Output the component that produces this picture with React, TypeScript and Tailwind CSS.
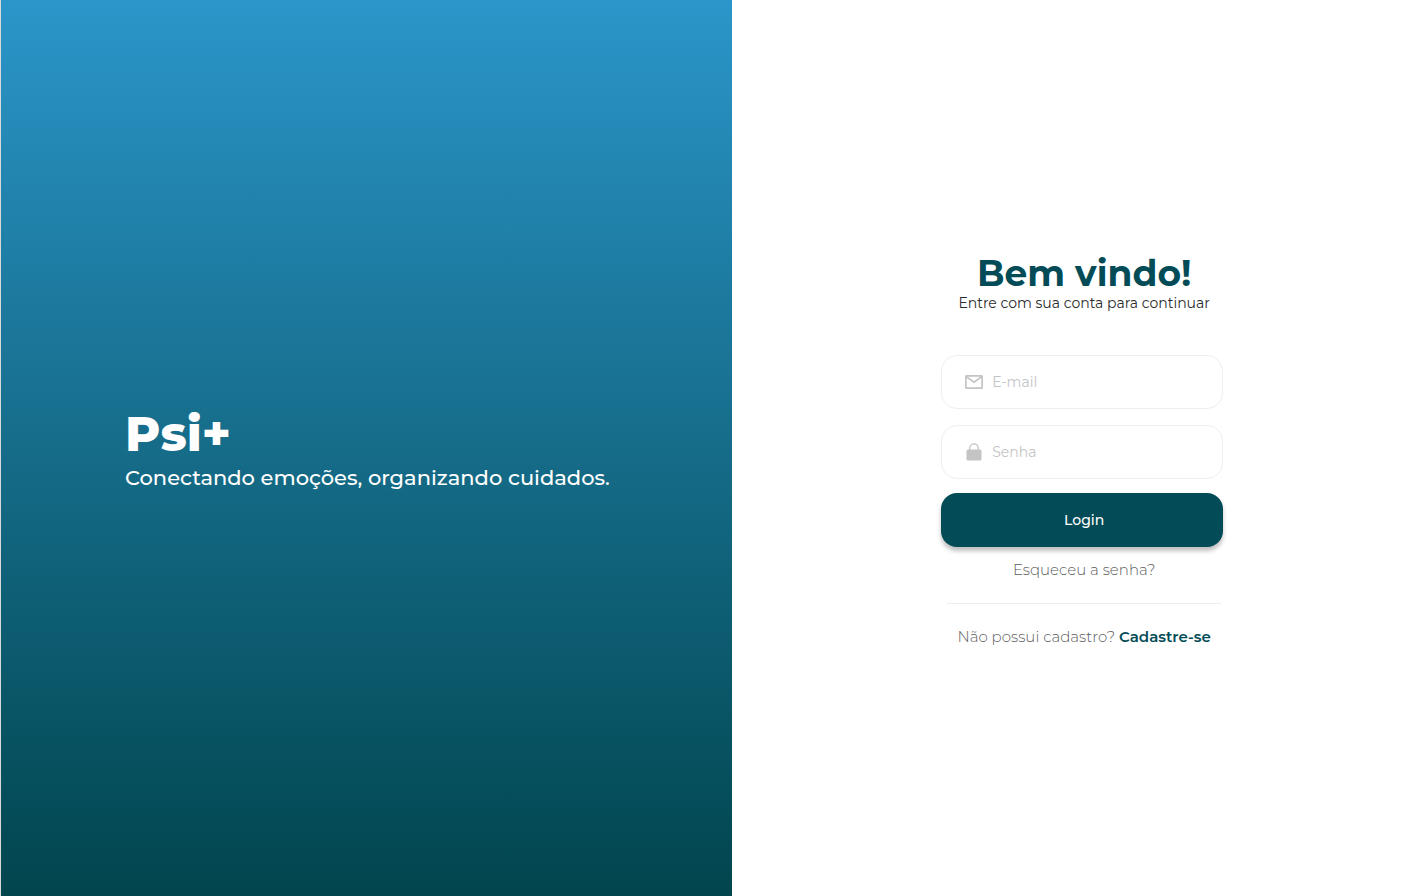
import type { ReactNode } from "react";

function MailIcon() {
  return (
    <svg viewBox="0 0 18 14" className="h-3.5 w-[18px] shrink-0" fill="none" stroke="#c4c4c4" strokeWidth="1.7" aria-hidden="true">
      <rect x="0.9" y="0.9" width="16.2" height="12.2" rx="0.4" />
      <path d="M1.2 1.6 9 7.2 16.8 1.6" />
    </svg>
  );
}

function LockIcon() {
  return (
    <svg viewBox="0 0 18 18" className="size-[18px] shrink-0" aria-hidden="true">
      <path d="M4.7 7V5.2a4.3 4.3 0 0 1 8.6 0V7" fill="none" stroke="#c4c4c4" strokeWidth="1.3" />
      <rect x="1.5" y="6.5" width="15" height="11" rx="1.5" fill="#c4c4c4" />
    </svg>
  );
}

type FieldProps = { id: string; type: string; label: string; icon: ReactNode };

function Field({ id, type, label, icon }: FieldProps) {
  return (
    <label
      htmlFor={id}
      className="flex h-[54px] w-full items-center gap-[9px] rounded-2xl border border-[#eeeeee] px-[23px]"
    >
      {icon}
      <input
        id={id}
        type={type}
        placeholder={label}
        aria-label={label}
        className="w-full min-w-0 bg-transparent text-sm text-neutral-800 outline-none placeholder:text-[#c4c4c4]"
      />
    </label>
  );
}

export default function App() {
  return (
    <main className="flex min-h-screen bg-white font-['Montserrat','Inter',sans-serif]">
      <section className="flex w-[51.5%] flex-col justify-center border-l border-[#d9d9d9] bg-linear-to-b from-[#2b96ca] to-[#02454e] bg-origin-border pt-1 pl-[124px] text-white">
        <h1 className="text-5xl leading-[56px] font-extrabold">Psi+</h1>
        <p className="text-[21px] leading-8 font-medium">Conectando emoções, organizando cuidados.</p>
      </section>

      <section className="flex flex-1 flex-col items-center justify-center pt-1.5 pl-2.5">
        <form className="flex w-[282px] flex-col items-center" onSubmit={(e) => e.preventDefault()}>
          <header className="flex w-full flex-col items-center pl-1">
            <h2 className="text-4xl font-bold whitespace-nowrap text-[#034c57]">Bem vindo!</h2>
            <p className="text-sm text-[#2b2b2b]">Entre com sua conta para continuar</p>
          </header>

          <div className="mt-[42px] flex w-full flex-col gap-4">
            <Field id="email" type="email" label="E-mail" icon={<MailIcon />} />
            <Field id="senha" type="password" label="Senha" icon={<LockIcon />} />
          </div>
          <button
            type="submit"
            className="mt-3.5 h-[54px] w-full rounded-2xl bg-[#034c57] pl-1 text-sm font-medium text-white shadow-[0_4px_4px_rgba(0,0,0,0.25)]"
          >
            Login
          </button>

          <footer className="flex w-full flex-col items-center pl-1">
            <a href="#recuperar" className="mt-[11px] text-[15px] leading-6 font-light text-[#5c5c5c]">
              Esqueceu a senha?
            </a>
            <hr className="mt-[21px] w-[274px] border-[#ececec]" />
            <p className="mt-[21px] text-[15px] leading-6 font-light whitespace-nowrap text-[#5c5c5c]">
              Não possui cadastro?{" "}
              <a href="#cadastro" className="font-semibold text-[#034c57]">
                Cadastre-se
              </a>
            </p>
          </footer>
        </form>
      </section>
    </main>
  );
}
